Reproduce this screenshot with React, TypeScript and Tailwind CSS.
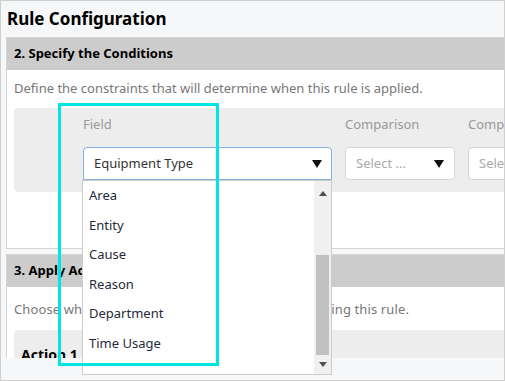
import React from "react";

const Tri = ({ className = "" }: { className?: string }) => (
  <svg width="10" height="8" viewBox="0 0 10 8" className={className}>
    <path d="M0 0 L10 0 L5 8 Z" fill="#111" />
  </svg>
);

export default function App() {
  const items = ["Area", "Entity", "Cause", "Reason", "Department", "Time Usage"];
  return (
    <div
      className="relative w-[505px] h-[381px] overflow-hidden bg-[#f6f7f8] border border-[#cfcfcf] text-[#333]"
      style={{ fontFamily: '"Noto Sans", "Open Sans", sans-serif' }}
    >
      <div className="h-[36px] flex items-center pl-[6px]">
        <h1 className="text-[17px] font-bold text-black">Rule Configuration</h1>
      </div>
      {/* Panel 1 */}
      <div className="ml-[5px] w-[520px] bg-white border border-[#d4d4d4]">
        <div className="h-[32px] bg-[#cccccc] flex items-center pl-[7px]">
          <span className="text-[13px] font-bold text-black">2. Specify the Conditions</span>
        </div>
        <div className="px-[7px] pt-[8px] pb-[56px]">
          <p className="text-[13px] text-[#777] leading-[20px]">
            Define the constraints that will determine when this rule is applied.
          </p>
          <div className="mt-[10px] h-[84px] rounded-[4px] bg-[#ededed] flex pl-[69px] pt-[6px] gap-[13px]">
            <div className="flex flex-col">
              <span className="text-[13px] text-[#999] leading-[20px]">Field</span>
              <div className="mt-[13px] w-[249px] h-[33px] bg-white border border-[#80b1e0] rounded-t-[4px] flex items-center justify-between pl-[10px] pr-[9px]">
                <span className="text-[13px] text-[#333]">Equipment Type</span>
                <Tri />
              </div>
            </div>
            <div className="flex flex-col">
              <span className="text-[13px] text-[#999] leading-[20px]">Comparison</span>
              <div className="mt-[13px] w-[110px] h-[33px] bg-white border border-[#d6d6d6] rounded-[4px] flex items-center justify-between pl-[10px] pr-[10px]">
                <span className="text-[13px] text-[#aaa]">Select ...</span>
                <Tri />
              </div>
            </div>
            <div className="flex flex-col">
              <span className="text-[13px] text-[#999] leading-[20px] whitespace-nowrap">Comparison Value</span>
              <div className="mt-[13px] w-[110px] h-[33px] bg-white border border-[#d6d6d6] rounded-[4px] flex items-center pl-[10px]">
                <span className="text-[13px] text-[#aaa]">Select ...</span>
              </div>
            </div>
          </div>
        </div>
      </div>
      {/* Panel 2 */}
      <div className="mt-[5px] ml-[5px] w-[520px] bg-white border border-[#d4d4d4] border-b-0">
        <div className="h-[32px] bg-[#cccccc] flex items-center pl-[7px]">
          <span className="text-[13px] font-bold text-black">3. Apply Actions</span>
        </div>
        <div className="px-[7px] pt-[12px]">
          <p className="text-[13px] text-[#777] leading-[20px] tracking-[0.12px]">
            Choose what actions will be performed when applying this rule.
          </p>
          <div className="mt-[11px] h-[28px] overflow-hidden rounded-t-[4px] bg-[#ededed] pl-[7px] pt-[12px]">
            <span className="text-[14px] font-bold text-black leading-[20px]">Action 1</span>
          </div>
        </div>
      </div>

      {/* Dropdown list */}
      <div className="absolute left-[81px] top-[179px] w-[250px] h-[195px] bg-white border border-[#cccccc] flex">
        <div className="flex-1 flex flex-col pl-[6px] pt-0">
          {items.map((it) => (
            <div key={it} className="h-[29.6px] flex items-center text-[13px] text-[#1f2a3a]">
              {it}
            </div>
          ))}
        </div>
        <div className="w-[17px] h-full bg-[#f0f0f0] flex flex-col items-center">
          <svg width="8" height="5" viewBox="0 0 8 5" className="mt-[10px]">
            <path d="M0 5 L8 5 L4 0 Z" fill="#505050" />
          </svg>
          <div className="mt-[59px] w-[13px] h-[100px] bg-[#c1c1c1]" />
          <svg width="8" height="5" viewBox="0 0 8 5" className="mt-[7px]">
            <path d="M0 0 L8 0 L4 5 Z" fill="#505050" />
          </svg>
        </div>
      </div>

      {/* Cyan highlight */}
      <div className="absolute left-[57px] top-[102px] w-[161px] h-[263px] border-[3px] border-[#00e5e5]" />
    </div>
  );
}
